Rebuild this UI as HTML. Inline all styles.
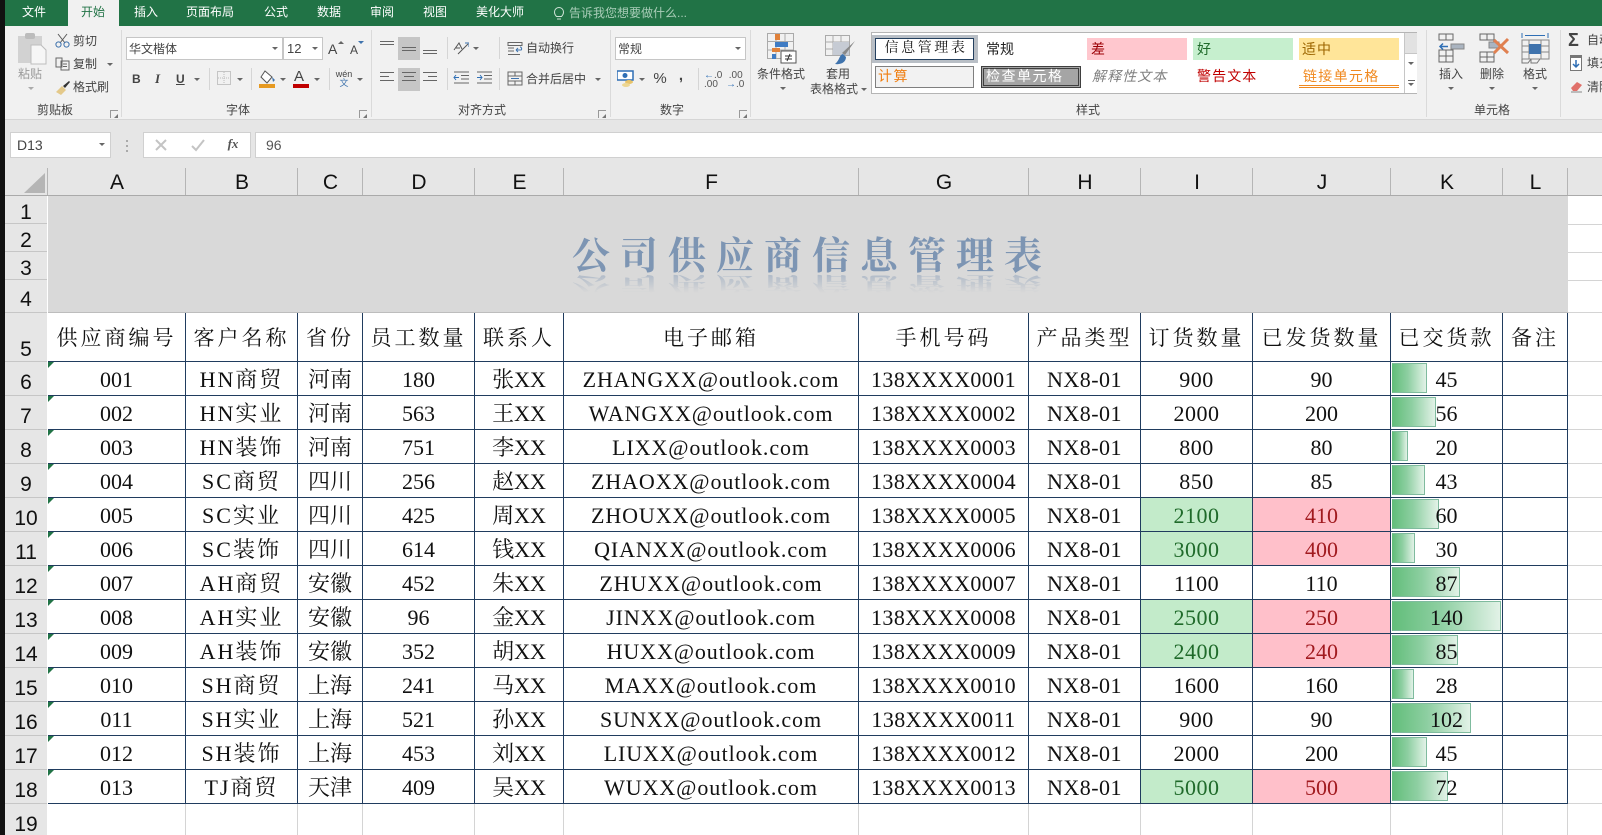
<!DOCTYPE html>
<html lang="zh">
<head>
<meta charset="utf-8">
<title>公司供应商信息管理表</title>
<style>
*{box-sizing:border-box}
html,body{margin:0;padding:0;width:1602px;height:835px;overflow:hidden;background:#fff}
body{position:relative;font-family:"Liberation Sans","Noto Sans CJK SC",sans-serif}
.a{position:absolute}
.t{position:absolute;white-space:nowrap;font-size:12px;line-height:16px;color:#444}
.c{transform:translateX(-50%)}
.w{color:#fff}
.car{position:absolute;width:0;height:0;border-left:3px solid transparent;border-right:3px solid transparent;border-top:3px solid #666}
.sep{position:absolute;top:30px;height:87px;width:1px;background:#dadada}
.div{position:absolute;width:1px;background:#d5d5d5}
.lau{position:absolute;top:110px;width:8px;height:8px;border-left:1px solid #999;border-top:1px solid #999}
.lau:after{content:"";position:absolute;right:0;bottom:0;width:4px;height:4px;background:#777;clip-path:polygon(100% 0,100% 100%,0 100%)}
.box{position:absolute;background:#fff;border:1px solid #c6c6c6}
.ch{position:absolute;top:158px;height:38px;font-size:21px;line-height:50px;text-align:center;color:#111;background:linear-gradient(#b5b5b5,#b5b5b5) right bottom/1px 28px no-repeat #e6e6e6}
.rh{position:absolute;left:5px;width:42px;font-size:21px;text-align:center;color:#111;background:#e6e6e6;border-bottom:1px solid #c6c6c6}
.rh span{position:absolute;left:0;right:0;bottom:-1px;line-height:26px}
#grid{position:absolute;left:48px;top:313px;border-collapse:separate;border-spacing:0;table-layout:fixed;width:1520px;font-family:"Liberation Serif","Noto Serif CJK SC",serif;color:#111}
#grid td{padding:3px 0 1px;text-align:center;white-space:nowrap;overflow:hidden;border-right:1px solid #203c5e;border-bottom:1px solid #203c5e;height:34px;font-size:22px;line-height:29px;position:relative;background:#fff}
#grid td:nth-child(2){letter-spacing:2px}
#grid td:nth-child(8),#grid td:nth-child(9){letter-spacing:.5px}
#grid tr.h td{height:49px;font-size:21px;letter-spacing:3px;line-height:44px}
#grid td.e{letter-spacing:.9px}
#grid td.p{letter-spacing:.4px}
#grid td.g{background:#c3ebca;color:#1f6a2a}
#grid td.r{background:#ffc0ca;color:#a11a1f}
#grid td.n:before{content:"";position:absolute;left:0;top:0;border-top:6px solid #217346;border-right:6px solid transparent}
.bar{position:absolute;left:1px;top:1px;height:30px;background:linear-gradient(90deg,#63be7b,#8ecfa2 45%,#e2f2e7);border:1px solid #7fbb9e;border-left-color:#63be7b}
#grid td span{position:relative}
.gl{position:absolute;left:1568px;width:34px;height:1px;background:#d4d4d4}
.gv{position:absolute;top:804px;height:31px;width:1px;background:#d4d4d4}
.ttl{position:absolute;left:572px;font-family:"Noto Serif CJK SC","Liberation Serif",serif;font-weight:700;font-size:38px;line-height:44px;letter-spacing:10px;white-space:nowrap;color:#7d95b3}
.rf{-webkit-mask-image:linear-gradient(to top,rgba(0,0,0,.45),transparent 85%);mask-image:linear-gradient(to top,rgba(0,0,0,.45),transparent 85%);transform:scaleY(-.5)}
</style>
</head>
<body>
<div class="a" style="left:0;top:0;width:5px;height:835px;background:#111;z-index:9"></div>

<!-- title bar -->
<div class="a" style="left:5px;top:0;width:1597px;height:26px;background:#217346"></div>
<div class="a" style="left:68px;top:0;width:51px;height:27px;background:#f1f1f1"></div>
<div class="t c w" style="left:34px;top:4px">文件</div>
<div class="t c" style="left:93px;top:4px;color:#217346">开始</div>
<div class="t c w" style="left:146px;top:4px">插入</div>
<div class="t c w" style="left:210px;top:4px">页面布局</div>
<div class="t c w" style="left:276px;top:4px">公式</div>
<div class="t c w" style="left:329px;top:4px">数据</div>
<div class="t c w" style="left:382px;top:4px">审阅</div>
<div class="t c w" style="left:435px;top:4px">视图</div>
<div class="t c w" style="left:500px;top:4px">美化大师</div>
<svg class="a" style="left:553px;top:6px" width="12" height="16" viewBox="0 0 12 16" fill="none" stroke="#cfe3d7"><path d="M3.500 10.500C2 9 1.500 8 1.500 6a4.500 4.500 0 0 1 9 0c0 2-.5 3-2 4.500zM4 13h4"/></svg>
<div class="t" style="left:569px;top:5px;color:#a9cdb8">告诉我您想要做什么...</div>

<!-- ribbon -->
<div class="a" style="left:5px;top:26px;width:1597px;height:94px;background:#f1f1f1;border-bottom:1px solid #d6d6d6"></div>
<div class="a" style="left:5px;top:120px;width:1597px;height:38px;background:#e6e6e6"></div>

<!-- clipboard -->
<svg class="a" style="left:18px;top:33px" width="29" height="32" viewBox="0 0 29 32"><rect x="0" y="3" width="24" height="27" fill="#d2d2d2"/><rect x="7" y="0" width="10" height="6" rx="2" fill="#bcbcbc"/><path d="M13 12h10l5 5v14H13z" fill="#f6f6f6" stroke="#bdbdbd"/></svg>
<div class="t" style="left:18px;top:66px;color:#9a9a9a">粘贴</div>
<div class="car" style="left:28px;top:87px;border-top-color:#aaa"></div>
<svg class="a" style="left:55px;top:33px" width="15" height="15" viewBox="0 0 15 15" fill="none" stroke="#5a5a5a"><path d="M3 1l7 9M12 1L5 10"/><circle cx="3.500" cy="11.500" r="2.600" stroke="#3f73ad"/><circle cx="11.500" cy="11.500" r="2.600" stroke="#3f73ad"/></svg>
<div class="t" style="left:73px;top:33px">剪切</div>
<svg class="a" style="left:55px;top:57px" width="15" height="14" viewBox="0 0 15 14" fill="none" stroke="#666"><path d="M1 1h6v9H1zM3 3h0M6 4h8v9H6zM8 7h4M8 9.500h4"/></svg>
<div class="t" style="left:73px;top:56px">复制</div>
<div class="car" style="left:107px;top:63px"></div>
<svg class="a" style="left:55px;top:80px" width="16" height="16" viewBox="0 0 16 16"><path d="M1 12l6-6 4 4-5 5z" fill="#e4c98a"/><path d="M8 6l6-5 1 1-5 6z" fill="#333"/></svg>
<div class="t" style="left:73px;top:79px">格式刷</div>
<div class="t c" style="left:55px;top:102px">剪贴板</div>
<div class="lau" style="left:110px"></div>
<div class="sep" style="left:121px"></div>

<!-- font -->
<div class="box" style="left:126px;top:37px;width:157px;height:23px"></div>
<div class="t" style="left:129px;top:41px">华文楷体</div>
<div class="car" style="left:272px;top:47px"></div>
<div class="box" style="left:283px;top:37px;width:40px;height:23px"></div>
<div class="t" style="left:287px;top:41px;font-size:13px">12</div>
<div class="car" style="left:312px;top:47px"></div>
<div class="t" style="left:328px;top:41px;font-size:14px">A</div>
<div class="car" style="left:338px;top:41px;border-top:0;border-bottom:3px solid #666"></div>
<div class="t" style="left:350px;top:42px;font-size:12px">A</div>
<div class="car" style="left:358px;top:41px;border-top-color:#3f73ad"></div>
<div class="t" style="left:132px;top:71px;font-weight:700">B</div>
<div class="t" style="left:155px;top:71px;font-family:'Liberation Serif',serif;font-style:italic;font-weight:700;font-size:13px">I</div>
<div class="t" style="left:176px;top:71px;font-weight:700;text-decoration:underline">U</div>
<div class="car" style="left:194px;top:78px"></div>
<div class="div" style="left:209px;top:68px;height:22px"></div>
<svg class="a" style="left:217px;top:71px" width="14" height="14" viewBox="0 0 14 14"><rect x=".5" y=".5" width="13" height="13" fill="none" stroke="#999" stroke-dasharray="1 1"/><path d="M7 1v12M1 7h12" stroke="#bbb" stroke-dasharray="1 1"/></svg>
<div class="car" style="left:237px;top:78px"></div>
<div class="div" style="left:251px;top:68px;height:22px"></div>
<svg class="a" style="left:259px;top:70px" width="17" height="18" viewBox="0 0 17 18"><path d="M6 1l7 6-5 6-6-6z" fill="#fff" stroke="#555"/><path d="M13 7l3 3-2 2z" fill="#3f73ad"/><rect x="0" y="14" width="16" height="4" fill="#e69a22"/></svg>
<div class="car" style="left:280px;top:78px"></div>
<div class="t" style="left:294px;top:69px;font-size:15px;line-height:16px;color:#444">A</div>
<div class="a" style="left:293px;top:84px;width:16px;height:3.500px;background:#c00000"></div>
<div class="car" style="left:314px;top:78px"></div>
<div class="div" style="left:329px;top:68px;height:22px"></div>
<div class="t c" style="left:344px;top:69px;font-size:9px;line-height:10px">wén</div>
<div class="t c" style="left:344px;top:78px;font-size:9px;line-height:10px;color:#3f73ad">文</div>
<div class="car" style="left:357px;top:78px"></div>
<div class="t c" style="left:238px;top:102px">字体</div>
<div class="lau" style="left:359px"></div>
<div class="sep" style="left:371px"></div>

<!-- alignment -->
<div class="a" style="left:398px;top:37px;width:22px;height:23px;background:#c6c6c6"></div>
<div class="a" style="left:398px;top:68px;width:22px;height:23px;background:#c6c6c6"></div>
<svg class="a" style="left:379px;top:40px" width="60" height="48" viewBox="0 0 60 48" fill="none" stroke="#666"><path d="M1 1.500h14M1 4.500h14M23 7.500h14M23 10.500h14M44 10.500h14M44 13.500h14M1 32.500h14M1 36.500h9M1 40.500h14M23 32.500h14M25 36.500h10M23 40.500h14M44 32.500h14M49 36.500h9M44 40.500h14"/></svg>
<div class="div" style="left:447px;top:37px;height:22px"></div>
<div class="div" style="left:447px;top:68px;height:22px"></div>
<svg class="a" style="left:453px;top:41px" width="16" height="14" viewBox="0 0 16 14" fill="none" stroke="#555"><path d="M1 9l5-7 3 6M3 7h4M5 13L15 3"/><path d="M12 2h4v4" stroke="#3f73ad"/></svg>
<div class="car" style="left:473px;top:47px"></div>
<svg class="a" style="left:453px;top:71px" width="40" height="14" viewBox="0 0 40 14" fill="none"><path d="M1 1h15M8 4.500h8M8 8h8M1 12h15M24 1h15M31 4.500h8M31 8h8M24 12h15" stroke="#666"/><path d="M6 6.500H1M3 4L1 6.500 3 9M24 6.500h5M27 4l2 2.500L27 9" stroke="#2f6fb5"/></svg>
<div class="div" style="left:499px;top:37px;height:22px"></div>
<div class="div" style="left:499px;top:68px;height:22px"></div>
<svg class="a" style="left:507px;top:41px" width="16" height="15" viewBox="0 0 16 15" fill="none" stroke="#666"><path d="M1 1.500h14v3H1zM1 7h6M1 10h6M1 13.500h12"/><path d="M9 9h5c1 0 1-3-1-3M9 9l2-2M9 9l2 2" stroke="#3f73ad"/></svg>
<div class="t" style="left:526px;top:40px">自动换行</div>
<svg class="a" style="left:507px;top:71px" width="16" height="15" viewBox="0 0 16 15" fill="none" stroke="#666"><path d="M1 1h14v13H1zM1 5h14M1 10h14M8 1v4M8 10v4"/><path d="M4 7.500h8" stroke="#3f73ad"/></svg>
<div class="t" style="left:526px;top:71px">合并后居中</div>
<div class="car" style="left:595px;top:78px"></div>
<div class="t c" style="left:482px;top:102px">对齐方式</div>
<div class="lau" style="left:598px"></div>
<div class="sep" style="left:610px"></div>

<!-- number -->
<div class="box" style="left:615px;top:37px;width:131px;height:23px"></div>
<div class="t" style="left:618px;top:41px">常规</div>
<div class="car" style="left:735px;top:47px"></div>
<svg class="a" style="left:617px;top:70px" width="18" height="18" viewBox="0 0 18 18"><rect x="0" y="1" width="16" height="9" fill="#fff" stroke="#2f6fb5" stroke-width="1.500"/><circle cx="8" cy="5.500" r="2.500" fill="#2f6fb5"/><ellipse cx="12" cy="12" rx="4" ry="2" fill="#e8c46a"/><ellipse cx="9" cy="15" rx="4" ry="2" fill="#edd692"/></svg>
<div class="car" style="left:639px;top:78px"></div>
<div class="t c" style="left:660px;top:71px;font-size:15px">%</div>
<div class="t c" style="left:681px;top:68px;font-size:15px;font-weight:700">,</div>
<div class="div" style="left:698px;top:68px;height:22px"></div>
<div class="t" style="left:704px;top:71px;font-size:10px;line-height:9px;color:#555"><span style="color:#2f6fb5">←</span>.0<br>.00</div>
<div class="t" style="left:726px;top:71px;font-size:10px;line-height:9px;color:#555">&nbsp;.00<br><span style="color:#2f6fb5">→</span>.0</div>
<div class="t c" style="left:672px;top:102px">数字</div>
<div class="lau" style="left:739px"></div>
<div class="sep" style="left:750px"></div>

<!-- cond format / table format -->
<svg class="a" style="left:767px;top:33px" width="30" height="31" viewBox="0 0 30 31"><path d="M.5.5h26v25H.5zM9 .5v25M18 .5v25M.5 8.500h26M.5 17h26" fill="none" stroke="#aaa"/><rect x="8" y="1" width="5" height="6" fill="#e0813a"/><rect x="8" y="9" width="13" height="5" fill="#3f7cc4"/><rect x="5" y="15" width="8" height="4" fill="#e0813a"/><rect x="5" y="21" width="4" height="5" fill="#3f7cc4"/><rect x="14" y="18" width="15" height="12" fill="#fff" stroke="#555"/><path d="M18 23h7M18 26h7M23 21l-3 7" stroke="#333" fill="none"/></svg>
<div class="t c" style="left:781px;top:66px">条件格式</div>
<div class="car" style="left:780px;top:87px"></div>
<svg class="a" style="left:825px;top:35px" width="31" height="30" viewBox="0 0 31 30"><path d="M.5.5h24v20H.5zM8 .5v20M16 .5v20M.5 7h24M.5 14h24" fill="none" stroke="#aaa"/><rect x="8" y="7" width="16" height="13" fill="#c6cbd4"/><path d="M30 6L20 20l-3-2z" fill="#888"/><path d="M18 19c-4 1-3 6-8 10 6 1 11-2 11-7z" fill="#3f73ad"/></svg>
<div class="t c" style="left:838px;top:66px">套用</div>
<div class="t c" style="left:834px;top:81px">表格格式</div>
<div class="car" style="left:861px;top:88px"></div>

<!-- styles gallery -->
<div class="a" style="left:871px;top:32px;width:546px;height:62px;background:#fff;border:1px solid #b5b5b5"></div>
<div class="a" style="left:872px;top:35px;width:106px;height:28px;background:#b9bfc6"></div>
<div class="a" style="left:875px;top:38px;width:99px;height:22px;background:#fff;border:1px solid #24405f"></div>
<div class="t c" style="left:926px;top:41px;letter-spacing:2.600px;color:#111;font-family:'Liberation Serif','Noto Serif CJK SC',serif;font-size:14px">信息管理表</div>
<div class="t" style="left:986px;top:41px;color:#222;font-size:14px">常规</div>
<div class="a" style="left:875px;top:66px;width:99px;height:22px;background:#f2f2f2;border:1px solid #7f7f7f"></div>
<div class="t" style="left:878px;top:68px;color:#f07f12;font-size:14px;letter-spacing:1.500px">计算</div>
<div class="a" style="left:981px;top:66px;width:100px;height:22px;background:#a5a5a5;border:3px double #3f3f3f"></div>
<div class="t" style="left:986px;top:68px;color:#fff;font-size:14px;letter-spacing:1.500px">检查单元格</div>
<div class="a" style="left:1087px;top:38px;width:100px;height:22px;background:#ffc7ce"></div>
<div class="t" style="left:1091px;top:41px;color:#9c0006;font-size:14px">差</div>
<div class="a" style="left:1193px;top:38px;width:100px;height:22px;background:#c6efce"></div>
<div class="t" style="left:1197px;top:41px;color:#1f6a2a;font-size:14px">好</div>
<div class="a" style="left:1299px;top:38px;width:100px;height:22px;background:#ffe599"></div>
<div class="t" style="left:1302px;top:41px;color:#9c6500;font-size:14px;letter-spacing:1px">适中</div>
<div class="t" style="left:1092px;top:68px;color:#7f7f7f;font-style:italic;font-size:14px;letter-spacing:1.100px">解释性文本</div>
<div class="t" style="left:1197px;top:68px;color:#c00000;font-size:14px;letter-spacing:1.100px">警告文本</div>
<div class="t" style="left:1303px;top:68px;color:#f0891f;font-size:14px;letter-spacing:1.300px">链接单元格</div>
<div class="a" style="left:1299px;top:85px;width:100px;height:3px;border-top:1px solid #f0891f;border-bottom:1px solid #f0891f"></div>
<div class="a" style="left:1404px;top:33px;width:13px;height:20px;background:#e2e2e2;border-left:1px solid #c6c6c6"></div>
<div class="a" style="left:1404px;top:53px;width:13px;height:20px;background:#fff;border:1px solid #c6c6c6;border-right:0"></div>
<div class="a" style="left:1404px;top:72px;width:13px;height:21px;background:#fff;border-left:1px solid #c6c6c6"></div>
<div class="car" style="left:1408px;top:62px"></div>
<div class="a" style="left:1408px;top:80px;width:7px;height:1px;background:#666"></div>
<div class="car" style="left:1408px;top:83px"></div>
<div class="t c" style="left:1088px;top:102px">样式</div>
<div class="sep" style="left:1426px"></div>

<!-- cells -->
<svg class="a" style="left:1438px;top:33px" width="27" height="30" viewBox="0 0 27 30" fill="none" stroke="#666"><path d="M1 1h14v6H1zM8 1v6M1 17h14v12H1zM1 23h14M8 17v12"/><path d="M13 11h13v5H13z" fill="#aab4c0" stroke="#888"/><path d="M10 13.500H2M5 10.500l-3 3 3 3" stroke="#2f6fb5" stroke-width="1.500"/></svg>
<div class="t c" style="left:1451px;top:66px">插入</div>
<div class="car" style="left:1448px;top:87px"></div>
<svg class="a" style="left:1479px;top:33px" width="31" height="30" viewBox="0 0 31 30" fill="none" stroke="#666"><path d="M1 1h14v6H1zM8 1v6M1 19h14v10H1zM1 24h14M8 19v10"/><rect x="10" y="9" width="10" height="6" fill="#aab4c0" stroke="#888"/><path d="M15 7l14 13M29 6L15 20" stroke="#e08050" stroke-width="3"/></svg>
<div class="t c" style="left:1492px;top:66px">删除</div>
<div class="car" style="left:1489px;top:87px"></div>
<svg class="a" style="left:1521px;top:32px" width="29" height="32" viewBox="0 0 29 32" fill="none" stroke="#888"><path d="M1 1v5M27 1v5M4 3.500h20" stroke="#2f6fb5"/><path d="M1 8h27v19H1zM1 14h27M1 20h27M8 8v19M20 8v19"/><rect x="8" y="12" width="12" height="10" fill="#3f73ad" stroke="none"/><path d="M1 27v4h6l3-4M10 27v4h6l3-4" stroke="#777"/></svg>
<div class="t c" style="left:1535px;top:66px">格式</div>
<div class="car" style="left:1532px;top:87px"></div>
<div class="t c" style="left:1492px;top:102px">单元格</div>
<div class="sep" style="left:1560px"></div>
<div class="t" style="left:1568px;top:30px;font-size:18px;line-height:20px;color:#444;font-weight:700">Σ</div>
<div class="t" style="left:1587px;top:32px">自动求和</div>
<svg class="a" style="left:1570px;top:55px" width="12" height="16" viewBox="0 0 12 16"><rect x=".5" y=".5" width="11" height="15" fill="#fff" stroke="#777"/><rect x="0" y="0" width="12" height="3" fill="#777"/><path d="M6 5v7M3 9l3 3 3-3" stroke="#2f6fb5" stroke-width="1.500" fill="none"/></svg>
<div class="t" style="left:1587px;top:55px">填充</div>
<svg class="a" style="left:1570px;top:80px" width="13" height="13" viewBox="0 0 13 13"><path d="M1 8l6-6 5 3-5 6H3z" fill="#e0706a"/><path d="M1 12h11" stroke="#888"/></svg>
<div class="t" style="left:1587px;top:79px">清除</div>

<!-- formula bar -->
<div class="box" style="left:10px;top:132px;width:101px;height:26px;border-color:#d0d0d0"></div>
<div class="t" style="left:17px;top:137px;font-size:14px">D13</div>
<div class="car" style="left:99px;top:143px"></div>
<div class="a" style="left:126px;top:140px;width:2px;height:2px;background:#aaa;box-shadow:0 5px 0 #aaa,0 10px 0 #aaa"></div>
<div class="box" style="left:143px;top:132px;width:108px;height:26px;border-color:#d0d0d0"></div>
<svg class="a" style="left:155px;top:138px" width="50" height="14" viewBox="0 0 50 14" fill="none" stroke="#c4c4c4" stroke-width="2"><path d="M1 2l10 10M11 2L1 12M37 8l4 4 8-10"/></svg>
<div class="t c" style="left:233px;top:136px;font-family:'Liberation Serif',serif;font-style:italic;font-weight:700;font-size:13px;color:#555">fx</div>
<div class="box" style="left:255px;top:132px;width:1347px;height:26px;border-color:#d0d0d0;border-right:0"></div>
<div class="t" style="left:266px;top:137px;font-size:14px;color:#555">96</div>

<!-- column headers -->
<div class="a" style="left:5px;top:158px;width:43px;height:38px;background:linear-gradient(#b5b5b5,#b5b5b5) right bottom/1px 28px no-repeat #e6e6e6"></div>
<div class="a" style="left:24px;top:173px;width:21px;height:20px;background:#b5b5b5;clip-path:polygon(100% 0,100% 100%,0 100%)"></div>
<div class="ch" style="left:48px;width:138px">A</div>
<div class="ch" style="left:186px;width:112px">B</div>
<div class="ch" style="left:298px;width:65px">C</div>
<div class="ch" style="left:363px;width:112px">D</div>
<div class="ch" style="left:475px;width:89px">E</div>
<div class="ch" style="left:564px;width:295px">F</div>
<div class="ch" style="left:859px;width:170px">G</div>
<div class="ch" style="left:1029px;width:112px">H</div>
<div class="ch" style="left:1141px;width:112px">I</div>
<div class="ch" style="left:1253px;width:138px">J</div>
<div class="ch" style="left:1391px;width:112px">K</div>
<div class="ch" style="left:1503px;width:65px">L</div>
<div class="ch" style="left:1568px;width:34px;background:#e6e6e6"></div>
<div class="a" style="left:5px;top:195px;width:1597px;height:1px;background:#aaa"></div>

<!-- row headers -->
<div class="rh" style="top:196px;height:28px"><span style="bottom:-3px">1</span></div>
<div class="rh" style="top:224px;height:28px"><span style="bottom:-3px">2</span></div>
<div class="rh" style="top:252px;height:28px"><span style="bottom:-3px">3</span></div>
<div class="rh" style="top:280px;height:33px"><span>4</span></div>
<div class="rh" style="top:313px;height:49px"><span style="bottom:-2px">5</span></div>
<div class="rh" style="top:362px;height:34px"><span>6</span></div>
<div class="rh" style="top:396px;height:34px"><span>7</span></div>
<div class="rh" style="top:430px;height:34px"><span>8</span></div>
<div class="rh" style="top:464px;height:34px"><span>9</span></div>
<div class="rh" style="top:498px;height:34px"><span>10</span></div>
<div class="rh" style="top:532px;height:34px"><span>11</span></div>
<div class="rh" style="top:566px;height:34px"><span>12</span></div>
<div class="rh" style="top:600px;height:34px"><span>13</span></div>
<div class="rh" style="top:634px;height:34px"><span>14</span></div>
<div class="rh" style="top:668px;height:34px"><span>15</span></div>
<div class="rh" style="top:702px;height:34px"><span>16</span></div>
<div class="rh" style="top:736px;height:34px"><span>17</span></div>
<div class="rh" style="top:770px;height:34px"><span>18</span></div>
<div class="rh" style="top:804px;height:31px;border:0"><span style="bottom:-3px">19</span></div>

<!-- title band -->
<div class="a" style="left:48px;top:196px;width:1520px;height:117px;background:#d9d9d9;border-bottom:1px solid #bdbdbd"></div>
<div class="ttl" style="top:231px">公司供应商信息管理表</div>
<div class="ttl rf" style="top:263px">公司供应商信息管理表</div>

<!-- light gridlines -->
<div class="gl" style="top:224px"></div><div class="gl" style="top:252px"></div><div class="gl" style="top:280px"></div><div class="gl" style="top:312px"></div><div class="gl" style="top:361px"></div>
<div class="gl" style="top:395px"></div><div class="gl" style="top:429px"></div><div class="gl" style="top:463px"></div><div class="gl" style="top:497px"></div><div class="gl" style="top:531px"></div><div class="gl" style="top:565px"></div><div class="gl" style="top:599px"></div><div class="gl" style="top:633px"></div><div class="gl" style="top:667px"></div><div class="gl" style="top:701px"></div><div class="gl" style="top:735px"></div><div class="gl" style="top:769px"></div><div class="gl" style="top:803px"></div>
<div class="gv" style="left:185px"></div><div class="gv" style="left:297px"></div><div class="gv" style="left:362px"></div><div class="gv" style="left:474px"></div><div class="gv" style="left:563px"></div><div class="gv" style="left:858px"></div><div class="gv" style="left:1028px"></div><div class="gv" style="left:1140px"></div><div class="gv" style="left:1252px"></div><div class="gv" style="left:1390px"></div><div class="gv" style="left:1502px"></div><div class="gv" style="left:1567px"></div>

<!-- sheet -->
<table id="grid">
<colgroup><col style="width:138px"><col style="width:112px"><col style="width:65px"><col style="width:112px"><col style="width:89px"><col style="width:295px"><col style="width:170px"><col style="width:112px"><col style="width:112px"><col style="width:138px"><col style="width:112px"><col style="width:65px"></colgroup>
<tr class="h"><td>供应商编号</td><td>客户名称</td><td>省份</td><td>员工数量</td><td>联系人</td><td>电子邮箱</td><td>手机号码</td><td>产品类型</td><td>订货数量</td><td>已发货数量</td><td>已交货款</td><td>备注</td></tr>
<tr><td class="n">001</td><td>HN商贸</td><td>河南</td><td>180</td><td>张XX</td><td class="e">ZHANGXX@outlook.com</td><td class="p">138XXXX0001</td><td>NX8-01</td><td>900</td><td>90</td><td><div class="bar" style="width:35px"></div><span>45</span></td><td></td></tr>
<tr><td class="n">002</td><td>HN实业</td><td>河南</td><td>563</td><td>王XX</td><td class="e">WANGXX@outlook.com</td><td class="p">138XXXX0002</td><td>NX8-01</td><td>2000</td><td>200</td><td><div class="bar" style="width:44px"></div><span>56</span></td><td></td></tr>
<tr><td class="n">003</td><td>HN装饰</td><td>河南</td><td>751</td><td>李XX</td><td class="e">LIXX@outlook.com</td><td class="p">138XXXX0003</td><td>NX8-01</td><td>800</td><td>80</td><td><div class="bar" style="width:16px"></div><span>20</span></td><td></td></tr>
<tr><td class="n">004</td><td>SC商贸</td><td>四川</td><td>256</td><td>赵XX</td><td class="e">ZHAOXX@outlook.com</td><td class="p">138XXXX0004</td><td>NX8-01</td><td>850</td><td>85</td><td><div class="bar" style="width:33px"></div><span>43</span></td><td></td></tr>
<tr><td class="n">005</td><td>SC实业</td><td>四川</td><td>425</td><td>周XX</td><td class="e">ZHOUXX@outlook.com</td><td class="p">138XXXX0005</td><td>NX8-01</td><td class="g">2100</td><td class="r">410</td><td><div class="bar" style="width:47px"></div><span>60</span></td><td></td></tr>
<tr><td class="n">006</td><td>SC装饰</td><td>四川</td><td>614</td><td>钱XX</td><td class="e">QIANXX@outlook.com</td><td class="p">138XXXX0006</td><td>NX8-01</td><td class="g">3000</td><td class="r">400</td><td><div class="bar" style="width:23px"></div><span>30</span></td><td></td></tr>
<tr><td class="n">007</td><td>AH商贸</td><td>安徽</td><td>452</td><td>朱XX</td><td class="e">ZHUXX@outlook.com</td><td class="p">138XXXX0007</td><td>NX8-01</td><td>1100</td><td>110</td><td><div class="bar" style="width:68px"></div><span>87</span></td><td></td></tr>
<tr><td class="n">008</td><td>AH实业</td><td>安徽</td><td>96</td><td>金XX</td><td class="e">JINXX@outlook.com</td><td class="p">138XXXX0008</td><td>NX8-01</td><td class="g">2500</td><td class="r">250</td><td><div class="bar" style="width:109px"></div><span>140</span></td><td></td></tr>
<tr><td class="n">009</td><td>AH装饰</td><td>安徽</td><td>352</td><td>胡XX</td><td class="e">HUXX@outlook.com</td><td class="p">138XXXX0009</td><td>NX8-01</td><td class="g">2400</td><td class="r">240</td><td><div class="bar" style="width:66px"></div><span>85</span></td><td></td></tr>
<tr><td class="n">010</td><td>SH商贸</td><td>上海</td><td>241</td><td>马XX</td><td class="e">MAXX@outlook.com</td><td class="p">138XXXX0010</td><td>NX8-01</td><td>1600</td><td>160</td><td><div class="bar" style="width:22px"></div><span>28</span></td><td></td></tr>
<tr><td class="n">011</td><td>SH实业</td><td>上海</td><td>521</td><td>孙XX</td><td class="e">SUNXX@outlook.com</td><td class="p">138XXXX0011</td><td>NX8-01</td><td>900</td><td>90</td><td><div class="bar" style="width:79px"></div><span>102</span></td><td></td></tr>
<tr><td class="n">012</td><td>SH装饰</td><td>上海</td><td>453</td><td>刘XX</td><td class="e">LIUXX@outlook.com</td><td class="p">138XXXX0012</td><td>NX8-01</td><td>2000</td><td>200</td><td><div class="bar" style="width:35px"></div><span>45</span></td><td></td></tr>
<tr><td class="n">013</td><td>TJ商贸</td><td>天津</td><td>409</td><td>吴XX</td><td class="e">WUXX@outlook.com</td><td class="p">138XXXX0013</td><td>NX8-01</td><td class="g">5000</td><td class="r">500</td><td><div class="bar" style="width:56px"></div><span>72</span></td><td></td></tr>
</table>
</body>
</html>
